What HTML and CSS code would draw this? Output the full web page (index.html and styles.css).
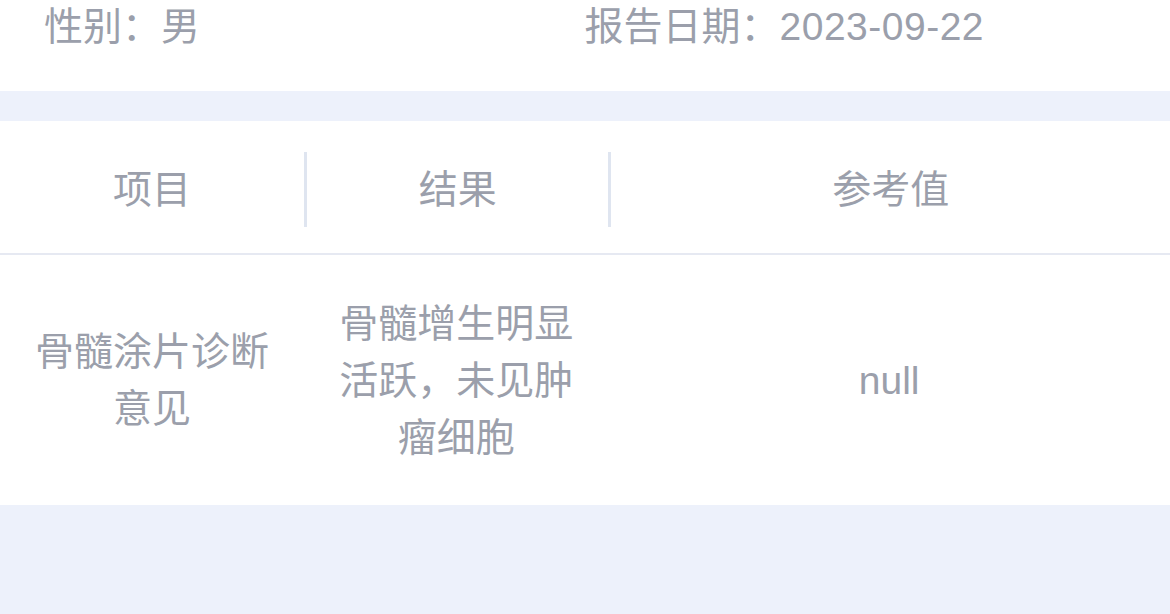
FILE: index.html
```html
<!DOCTYPE html>
<html lang="zh-CN">
<head>
  <meta charset="UTF-8" />
  <meta name="viewport" content="width=device-width, initial-scale=1.0"/>
  <title>检查报告</title>
  <link rel="stylesheet" href="styles.css">
</head>
<body>
  <!-- Patient info -->
  <div class="info">
    <div class="info-item">性别：男</div>
    <div class="info-item">报告日期：<span class="date">2023-09-22</span></div>
  </div>

  <!-- Result table -->
  <div class="table">
    <div class="row head">
      <div class="cell">项目</div>
      <div class="cell sep">结果</div>
      <div class="cell sep">参考值</div>
    </div>
    <div class="row body">
      <div class="cell">骨髓涂片诊断意见</div>
      <div class="cell">骨髓增生明显活跃，未见肿瘤细胞</div>
      <div class="cell">null</div>
    </div>
  </div>
</body>
</html>
```

FILE: styles.css
```css
* {
  box-sizing: border-box;
}

body {
  margin: 0;
  background: #edf1fb;
  font-family: "Liberation Sans", "Noto Sans CJK SC", sans-serif;
  font-size: 39px;
  color: #9b9fab;
  height: 614px;
  overflow: hidden;
}

.info {
  display: grid;
  grid-template-columns: 1fr 1fr;
  height: 91px;
  padding: 0 45px 0 44px;
  background: #fff;
  line-height: 54px;
}

.date {
  letter-spacing: 0.5px;
}

.table {
  margin-top: 30px;
  background: #fff;
}

.row {
  display: grid;
  grid-template-columns: 26% 26% 48%;
  align-items: center;
}

.row.head {
  height: 134px;
  padding-top: 4px;
  border-bottom: 2px solid #e6e9f2;
}

.row.head .cell {
  height: 75px;
  line-height: 75px;
}

.row.head .cell.sep {
  border-left: 3px solid #dfe5f0;
}

.row.body {
  height: 250px;
  line-height: 57px;
}

.cell {
  text-align: center;
  padding: 0 30px;
}
```
